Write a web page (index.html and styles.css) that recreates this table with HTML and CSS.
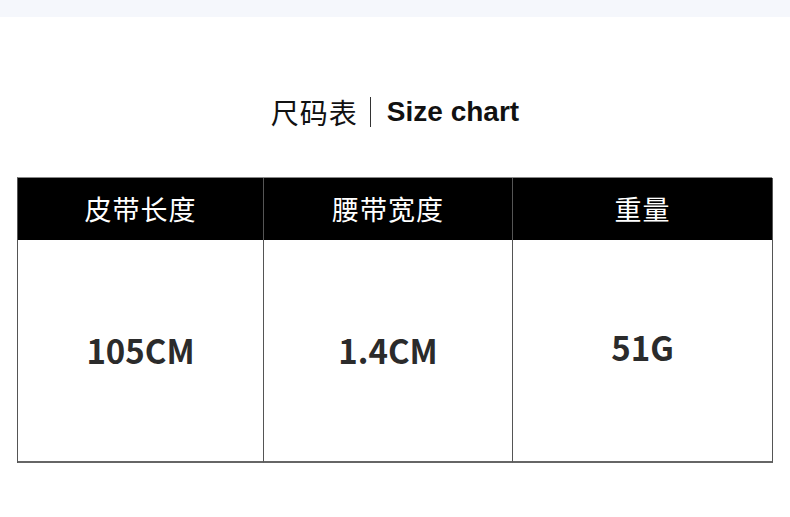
FILE: index.html
```html
<!DOCTYPE html>
<html lang="zh">
<head>
<meta charset="utf-8">
<link rel="stylesheet" href="styles.css">
</head>
<body>
<div class="topbar"></div>
<h1 class="title"><span class="cn">尺码表</span><span class="sep"></span><span class="en">Size chart</span></h1>
<div class="chart">
  <div class="head">皮带长度</div>
  <div class="head">腰带宽度</div>
  <div class="head">重量</div>
  <div class="cell">105CM</div>
  <div class="cell">1.4CM</div>
  <div class="cell up">51G</div>
</div>
</body>
</html>
```
FILE: styles.css
```css
html, body { margin: 0; padding: 0; background: #fff; }
body { width: 790px; height: 517px; overflow: hidden; font-family: "Noto Sans CJK SC", "Noto Sans", sans-serif; }
.topbar { height: 17px; background: #f5f7fc; }
.title {
  margin: 78px 0 0 0;
  height: 34px;
  display: flex;
  justify-content: center;
  align-items: center;
  font-weight: normal;
  padding-left: 0;
}
.cn { font-family: "Noto Sans CJK SC", sans-serif; font-size: 28px; color: #111; font-weight: 400; margin-right: 12px; letter-spacing: 1px; }
.sep { width: 1px; height: 30px; background: #333; margin-right: 16px; }
.en { font-family: "Liberation Sans", Arial, sans-serif; font-size: 28px; font-weight: 700; color: #111; }
.chart {
  margin: 48px 0 0 17px;
  width: 755px;
  display: grid;
  grid-template-columns: 246px 249px 260px;
  grid-template-rows: 62px 223px;
  border-top: 1px solid #888;
  border-left: 1px solid #555;
  box-sizing: border-box;
}
.head {
  background: #000;
  color: #fff;
  font-size: 27px;
  display: flex;
  align-items: center;
  justify-content: center;
  border-right: 1px solid #555;
  letter-spacing: 1px;
  padding-bottom: 1px;
}
.cell {
  background: #fff;
  color: #2b2b2b;
  font-family: "Noto Sans CJK SC", "Noto Sans", sans-serif;
  font-weight: 700;
  font-size: 33px;
  display: flex;
  align-items: center;
  justify-content: center;
  border-right: 1px solid #555;
  border-bottom: 2px solid #666;
  padding-bottom: 2px;
}
.cell.up { padding-bottom: 8px; }
```
